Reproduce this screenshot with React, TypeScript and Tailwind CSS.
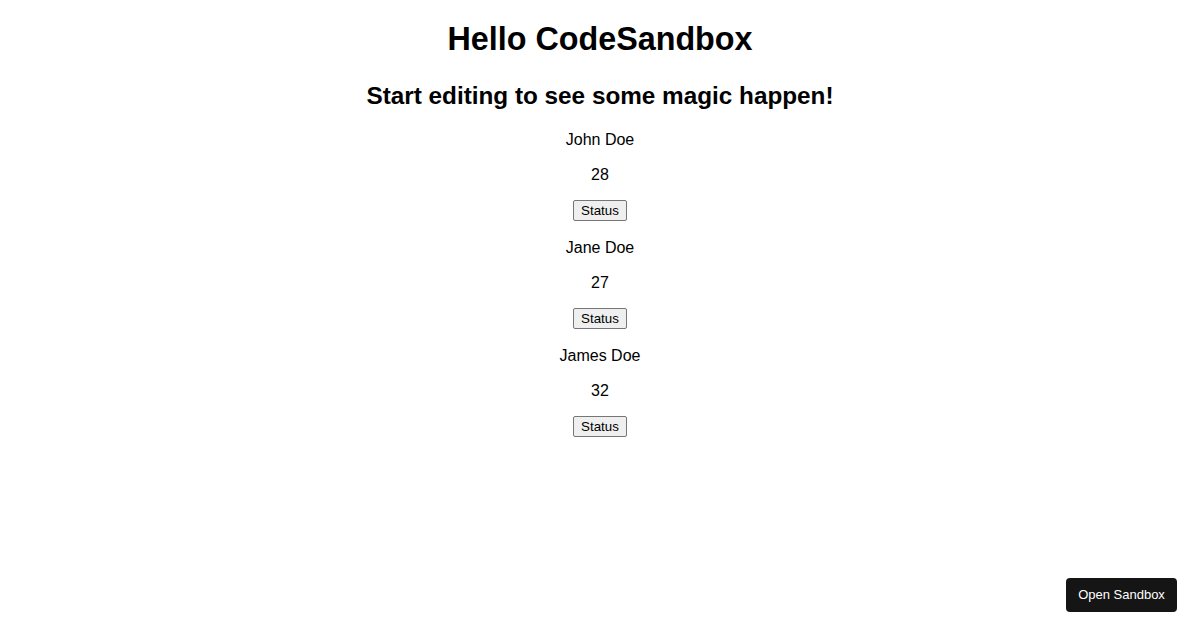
import React from 'react';

type Person = { name: string; age: number };

const people: Person[] = [
    { name: 'John Doe', age: 28 },
    { name: 'Jane Doe', age: 27 },
    { name: 'James Doe', age: 32 },
];

const App: React.FC = () => {
    return (
        <div className="min-h-[630px] bg-white pt-[21.44px] px-2 text-center text-black font-['Liberation_Sans',Arial,sans-serif]">
            <h1 className="text-[32.3px] font-bold leading-[37px] mb-[22.5px]">Hello CodeSandbox</h1>
            <h2 className="text-[24.3px] font-bold leading-[29px] mb-[19.92px]">Start editing to see some magic happen!</h2>
            {people.map((p) => (
                <div key={p.name}>
                    <p className="text-base leading-[19px] mb-4">{p.name}</p>
                    <p className="text-base leading-[19px] mb-4">{p.age}</p>
                    <div className="flex justify-center mb-[17px]">
                        <button
                            type="button"
                            className="h-[21px] text-[13.33px] leading-[15px] px-[7px] bg-[#efefef] border border-[#767676] rounded-[2px]"
                        >
                            Status
                        </button>
                    </div>
                </div>
            ))}
            <button
                type="button"
                className="fixed right-[23px] bottom-[18px] w-[111px] h-[34px] rounded-[4px] bg-[#151515] text-white text-[13px] font-['Liberation_Sans',Arial,sans-serif]"
            >
                Open Sandbox
            </button>
        </div>
    );
};

export default App;
